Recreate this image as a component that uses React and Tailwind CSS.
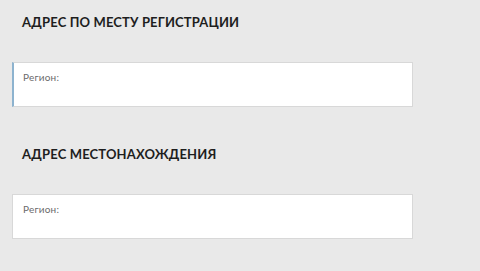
export default function App() {
  return (
    <div className="min-h-screen w-full bg-[#e9e9e9] pl-[12px] pt-[14px] font-['Lato','Noto_Sans',sans-serif]">
      <h2 className="pl-[10px] text-[13px] leading-[16px] font-bold text-[#1e1e1e] tracking-[0.15px]">
        АДРЕС ПО МЕСТУ РЕГИСТРАЦИИ
      </h2>
      <div className="mt-[32px] h-[45px] w-[401px] border border-[#d8d8d8] border-l-2 border-l-[#8db3cf] bg-white pl-[9px] pt-[8px]">
        <span className="block text-[10px] leading-[12px] text-[#6b6b6b] tracking-[0.2px]">Регион:</span>
      </div>

      <h2 className="mt-[39px] pl-[10px] text-[13px] leading-[16px] font-bold text-[#1e1e1e] tracking-[0.15px]">
        АДРЕС МЕСТОНАХОЖДЕНИЯ
      </h2>
      <div className="mt-[32px] h-[45px] w-[401px] border border-[#d8d8d8] bg-white pl-[10px] pt-[8px]">
        <span className="block text-[10px] leading-[12px] text-[#6b6b6b] tracking-[0.2px]">Регион:</span>
      </div>
    </div>
  );
}
